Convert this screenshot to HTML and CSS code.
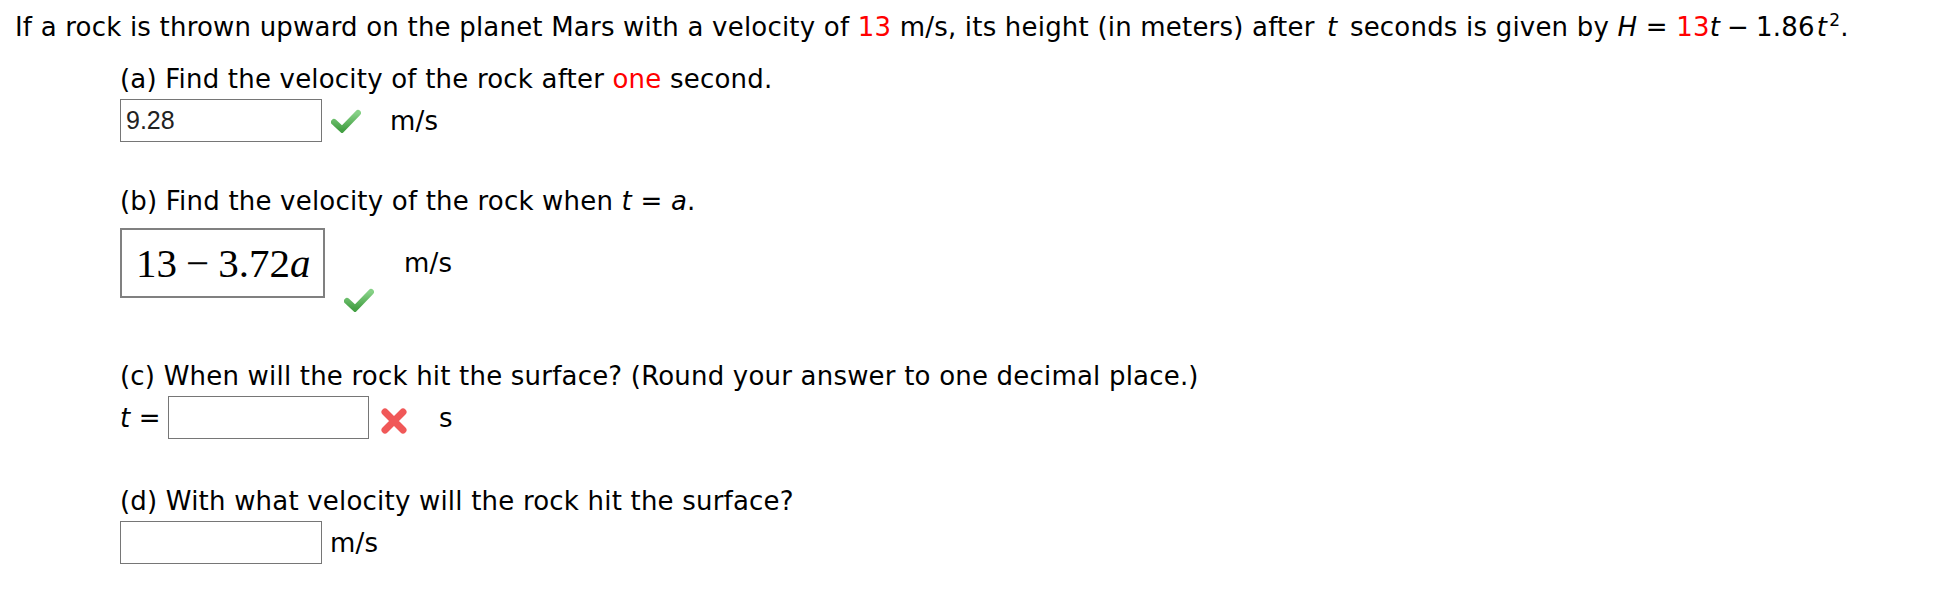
FILE: index.html
```html
<!DOCTYPE html>
<html>
<head>
<meta charset="utf-8">
<link rel="stylesheet" href="styles.css">
</head>
<body>
<div class="page">
  <p class="intro">If a rock is thrown upward on the planet Mars with a velocity of <span class="red">13</span> m/s, its height (in meters) after <i class="var">t</i> seconds is given by <i>H</i> = <span class="red">13</span><i>t</i><span class="minus">−</span>1.86<i class="tt">t</i><sup>2</sup>.</p>

  <div class="part part-a">
    <p class="q">(a) Find the velocity of the rock after <span class="red">one</span> second.</p>
    <div class="row">
      <div class="box"><span class="val">9.28</span></div>
      <svg class="check check-a" viewBox="0 0 30 24" width="30" height="24">
        <defs>
          <linearGradient id="ga" x1="0" y1="0" x2="0" y2="1">
            <stop offset="0" stop-color="#86d186"/>
            <stop offset="1" stop-color="#44a044"/>
          </linearGradient>
        </defs>
        <path d="M3 13 L11 20.5 L27 4" fill="none" stroke="url(#ga)" stroke-width="6" stroke-linecap="round" stroke-linejoin="miter"/>
      </svg>
      <span class="unit unit-a">m/s</span>
    </div>
  </div>

  <div class="part part-b">
    <p class="q">(b) Find the velocity of the rock when <i>t</i> = <i>a</i>.</p>
    <div class="row row-b">
      <div class="mathbox"><span class="m">13</span><span class="m op">−</span><span class="m">3.72</span><span class="m mi">a</span></div>
      <svg class="check check-b" viewBox="0 0 30 24" width="30" height="24">
        <defs>
          <linearGradient id="gb" x1="0" y1="0" x2="0" y2="1">
            <stop offset="0" stop-color="#86d186"/>
            <stop offset="1" stop-color="#44a044"/>
          </linearGradient>
        </defs>
        <path d="M3 13 L11 20.5 L27 4" fill="none" stroke="url(#gb)" stroke-width="6" stroke-linecap="round" stroke-linejoin="miter"/>
      </svg>
      <span class="unit unit-b">m/s</span>
    </div>
  </div>

  <div class="part part-c">
    <p class="q">(c) When will the rock hit the surface? (Round your answer to one decimal place.)</p>
    <div class="row">
      <span class="lbl"><i>t</i> =</span>
      <div class="box box-c"></div>
      <svg class="cross" viewBox="0 0 28 26" width="28" height="26">
        <path d="M5 4 L23 22 M23 4 L5 22" fill="none" stroke="#f05858" stroke-width="7" stroke-linecap="round"/>
      </svg>
      <span class="unit unit-c">s</span>
    </div>
  </div>

  <div class="part part-d">
    <p class="q">(d) With what velocity will the rock hit the surface?</p>
    <div class="row">
      <div class="box"></div>
      <span class="unit unit-d">m/s</span>
    </div>
  </div>
</div>
</body>
</html>
```

FILE: styles.css
```css
html, body {
  margin: 0;
  padding: 0;
  background: #ffffff;
}

.page {
  font-family: "DejaVu Sans", Verdana, sans-serif;
  font-size: 26px;
  letter-spacing: 0.2px;
  color: #000;
  padding: 12px 0 0 15px;
}

p {
  margin: 0;
  line-height: 30px;
}

.red {
  color: #ff0000;
}

.var {
  margin: 0 4px;
}

.minus {
  margin: 0 7px;
}

.tt {
  margin-left: 2px;
}

sup {
  font-size: 17px;
  line-height: 0;
  vertical-align: 10px;
  margin-left: 2px;
}

.part {
  margin-left: 105px;
}

.part-a { margin-top: 22px; }
.part-b { margin-top: 44px; }
.part-c { margin-top: 49px; }
.part-d { margin-top: 47px; }

.row {
  display: flex;
  align-items: center;
  margin-top: 5px;
}

.box {
  width: 200px;
  height: 41px;
  border: 1px solid #767676;
  display: flex;
  align-items: center;
  padding-left: 7px;
  box-sizing: content-box;
}

.box .val {
  font-family: "Liberation Sans", Arial, sans-serif;
  font-size: 25px;
  letter-spacing: 0;
  color: #222;
}

.part-a .box,
.part-d .box {
  width: 195px;
  padding-left: 5px;
}

.check-a {
  margin-left: 9px;
}

.unit-a {
  margin-left: 29px;
}

.row-b {
  align-items: flex-start;
  margin-top: 12px;
}

.mathbox {
  width: 201px;
  height: 66px;
  border: 2px solid #808080;
  display: flex;
  align-items: center;
  font-family: "Liberation Serif", "DejaVu Serif", serif;
  font-size: 41px;
  letter-spacing: 0;
}

.mathbox .m:first-child {
  margin-left: 14px;
}

.mathbox .op {
  margin: 0 9px;
}

.mathbox .mi {
  font-style: italic;
}

.check-b {
  margin-left: 19px;
  margin-top: 60px;
}

.unit-b {
  margin-left: 30px;
  line-height: 70px;
}

.lbl {
  width: 48px;
  flex: none;
}

.box-c {
  width: 199px;
  padding-left: 0;
}

.cross {
  margin-left: 11px;
  margin-top: 6px;
}

.unit-c {
  margin-left: 31px;
}

.unit-d {
  margin-left: 8px;
}
```
